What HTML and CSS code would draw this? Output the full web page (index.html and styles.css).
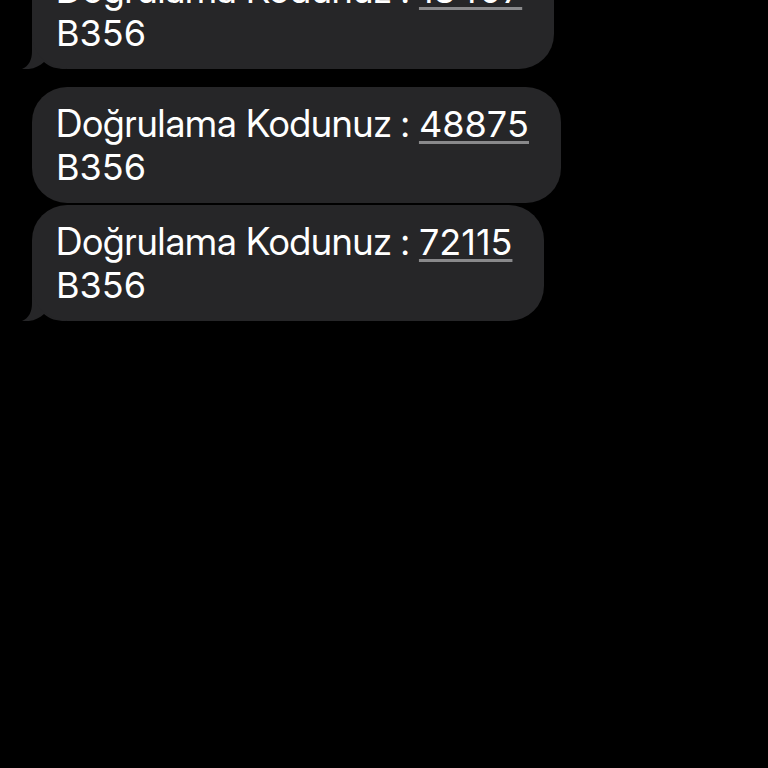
FILE: index.html
```html
<!DOCTYPE html>
<html lang="tr">
<head>
<meta charset="utf-8">
<meta name="viewport" content="width=device-width, initial-scale=1">
<title>Mesajlar</title>
<link rel="stylesheet" href="styles.css">
</head>
<body>
<main class="thread">
  <div class="group">
    <p class="bubble">Doğrulama Kodunuz : <a class="digits code" href="#">18407</a><br><span class="digits">B356</span>
      <svg class="tail" viewBox="0 0 44 36" aria-hidden="true"><path d="M10 0V18C10 27 7 33 0 36C9 37 17 34 22 29C28 34 34 36 44 36V0Z"/></svg>
    </p>
  </div>
  <div class="group">
    <p class="bubble">Doğrulama Kodunuz : <a class="digits code" href="#">48875</a><br><span class="digits">B356</span></p>
    <p class="bubble">Doğrulama Kodunuz : <a class="digits code" href="#">72115</a><br><span class="digits">B356</span>
      <svg class="tail" viewBox="0 0 44 36" aria-hidden="true"><path d="M10 0V18C10 27 7 33 0 36C9 37 17 34 22 29C28 34 34 36 44 36V0Z"/></svg>
    </p>
  </div>
</main>
</body>
</html>
```
FILE: styles.css
```css
body {
  margin: 0;
  background: #000;
  color: #fff;
  font-family: "Inter Display", Inter, "Liberation Sans", sans-serif;
  font-size: 38px;
  font-variant-ligatures: no-contextual;
  line-height: 43px;
}

/* The thread is scrolled down, so the first bubble starts above the window. */
.thread {
  display: flex;
  flex-direction: column;
  gap: 18px;
  isolation: isolate;
  margin-top: -47px;
  padding: 0 32px;
}

.group {
  display: flex;
  flex-direction: column;
  align-items: flex-start;
  gap: 2px;
}

.bubble {
  position: relative;
  margin: 0;
  padding: 15px 32px 15px 24px;
  border-radius: 35px;
  background: #262628;
}

.digits {
  font-family: Inter, "Liberation Sans", sans-serif;
  font-size: 36px;
  font-kerning: none;
  line-height: 1;
}

.code {
  color: inherit;
  text-decoration: underline;
  text-decoration-color: #89898b;
  text-decoration-thickness: 3px;
  text-decoration-skip-ink: none;
  text-underline-offset: 4px;
}

/* Sits behind the bubble's text and fills its lower left corner. */
.tail {
  position: absolute;
  z-index: -1;
  bottom: 0;
  left: -10px;
  width: 44px;
  height: 36px;
  fill: #262628;
}
```
